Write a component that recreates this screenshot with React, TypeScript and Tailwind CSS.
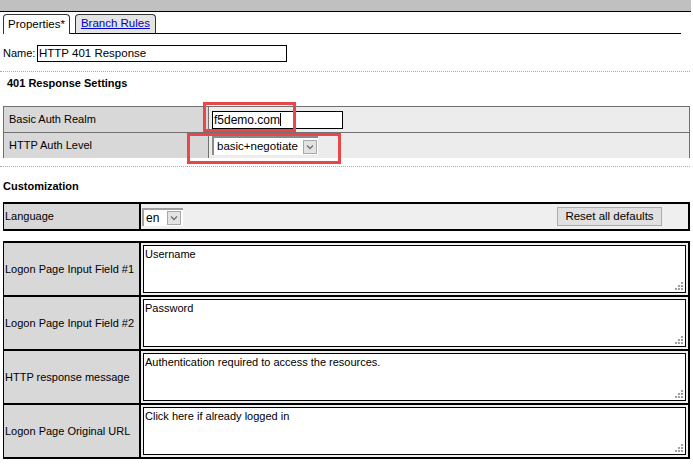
import React from "react";

const font = { fontFamily: '"Liberation Sans", Arial, sans-serif' };

function Grip() {
  return (
    <svg width="8" height="8" viewBox="0 0 8 8" className="absolute right-[2px] bottom-[2px]">
      <rect x="6" y="0" width="2" height="2" fill="#a0a0a0" />
      <rect x="3" y="3" width="2" height="2" fill="#a0a0a0" />
      <rect x="6" y="3" width="2" height="2" fill="#a0a0a0" />
      <rect x="0" y="6" width="2" height="2" fill="#a0a0a0" />
      <rect x="3" y="6" width="2" height="2" fill="#a0a0a0" />
      <rect x="6" y="6" width="2" height="2" fill="#a0a0a0" />
    </svg>
  );
}

function Arrow() {
  return (
    <div className="w-[14px] h-[14px] bg-[#e3e3e3] border border-[#a8a8a8] flex items-center justify-center shrink-0">
      <svg width="8" height="6" viewBox="0 0 8 6">
        <path d="M1 1.5 L4 4.5 L7 1.5" stroke="#707070" strokeWidth="1.3" fill="none" />
      </svg>
    </div>
  );
}

function TextRow({ label, value, last }: { label: string; value: string; last?: boolean }) {
  return (
    <div className={`flex ${last ? "h-[52px]" : "h-[54px] border-b-2 border-black"}`}>
      <div className="w-[137px] bg-[#d8d8d8] border-r-2 border-black flex items-center pl-[1px] text-[11px] text-black">
        {label}
      </div>
      <div className="flex-1 bg-[#efefef] p-[2px]">
        <div className="relative h-full bg-white border border-black text-[11px] text-black pl-[1px] pt-[2px] leading-[13px]">
          {value}
          <Grip />
        </div>
      </div>
    </div>
  );
}

export default function App() {
  return (
    <div className="w-[693px] h-[472px] bg-white overflow-hidden relative" style={font}>
      {/* top bar */}
      <div className="w-[691px] h-[12px] bg-[#c0c0c0] border-b border-black" />

      {/* tabs */}
      <div className="flex items-end w-[681px] h-[22px] pl-[3px]">
        <div className="h-[20px] px-[4px] bg-white border-x border-t border-[#333] rounded-t-[4px] text-[11.5px] text-black flex items-center">
          Properties*
        </div>
        <div className="w-[5px] border-b border-black" />
        <div className="h-[20px] px-[5px] bg-[#e4e4e4] border-x border-t border-[#333] rounded-t-[4px] text-[11.5px] flex items-center border-b border-b-black">
          <span className="text-[#0000cc] underline">Branch Rules</span>
        </div>
        <div className="flex-1 border-b border-black" />
      </div>

      {/* name row */}
      <div className="flex items-center mt-[11px] pl-[3px] h-[17px]">
        <span className="text-[11px] text-black w-[34px]">Name:</span>
        <div className="w-[250px] h-[17px] border border-black flex items-center pl-[1px] text-[11.5px] text-black">
          HTTP 401 Response
        </div>
      </div>

      <div className="mt-[9px] w-[690px] border-t border-dotted border-[#aaaaaa]" />

      <div className="mt-[5px] pl-[7px] text-[11px] font-bold text-black leading-[13px]">401 Response Settings</div>

      {/* settings table */}
      <div className="mt-[16px] ml-[3px] w-[687px] border-t border-x border-[#707070] text-[11px] text-black">
        <div className="flex h-[26px] border-b border-[#707070]">
          <div className="w-[205px] bg-[#d8d8d8] border-r border-[#707070] flex items-center pl-[5px]">Basic Auth Realm</div>
          <div className="flex-1 bg-[#ececec] flex items-center pl-[3px]">
            <div className="w-[131px] h-[18px] bg-white border border-black flex items-center pl-[1px] text-[12px]">
              f5demo.com<span className="w-px h-[13px] bg-black" />
            </div>
          </div>
        </div>
        <div className="flex h-[25px]">
          <div className="w-[205px] bg-[#d8d8d8] border-r border-[#707070] flex items-center pl-[5px]">HTTP Auth Level</div>
          <div className="flex-1 bg-[#ececec] flex items-center pl-[3px]">
            <div className="w-[106px] h-[19px] bg-white border-t-2 border-l-2 border-[#8a8a8a] flex items-center justify-between pl-[3px] pr-[1px] text-[11.5px]">
              basic+negotiate
              <Arrow />
            </div>
          </div>
        </div>
      </div>

      <div className="mt-[8px] w-[690px] border-t border-dotted border-[#aaaaaa]" />

      <div className="mt-[13px] pl-[3px] text-[11px] font-bold text-black leading-[13px]">Customization</div>

      {/* language table */}
      <div className="mt-[9px] ml-[3px] w-[687px] h-[29px] flex border-t-2 border-b-2 border-l border-r-2 border-black text-[11px] text-black">
        <div className="w-[137px] bg-[#d8d8d8] border-r-2 border-black flex items-center pl-[1px]">Language</div>
        <div className="flex-1 bg-[#efefef] flex items-center pl-[1px] pr-[26px] justify-between">
          <div className="w-[41px] h-[18px] bg-white border-t-2 border-l-2 border-[#a0a0a0] flex items-center justify-between pl-[2px] pr-[2px] text-[12px]">
            en
            <Arrow />
          </div>
          <div className="w-[105px] h-[19px] bg-[#e1e1e1] border border-[#adadad] flex items-center justify-center text-[11.5px]">
            Reset all defaults
          </div>
        </div>
      </div>

      {/* big table */}
      <div className="mt-[10px] ml-[3px] w-[687px] border-t-2 border-b-2 border-l border-r-2 border-black">
        <TextRow label="Logon Page Input Field #1" value="Username" />
        <TextRow label="Logon Page Input Field #2" value="Password" />
        <TextRow label="HTTP response message" value="Authentication required to access the resources." />
        <TextRow label="Logon Page Original URL" value="Click here if already logged in" last />
      </div>

      {/* red annotation boxes */}
      <div className="absolute left-[203px] top-[102px] w-[93px] h-[30px] border-[3px] border-[#e8474a]" />
      <div className="absolute left-[187px] top-[133px] w-[154px] h-[31px] border-[3px] border-[#e8474a]" />
    </div>
  );
}
